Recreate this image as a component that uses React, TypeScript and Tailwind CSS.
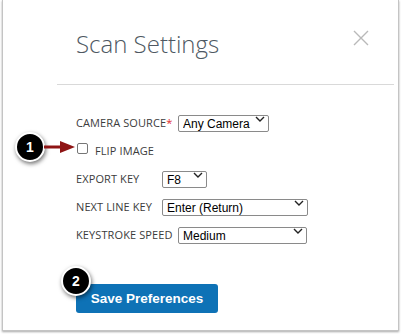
import React from "react";

const labelCls =
  "text-[11px] leading-[11px] mb-[-1px] uppercase text-[#3c3c3c] tracking-[0.1px]";

function FakeSelect({ value, width }: { value: string; width: string }) {
  return (
    <div className={`relative h-[17px] ${width}`}>
      <select
        defaultValue={value}
        className="appearance-none w-full h-full border border-[#8a8a8a] rounded-[2px] bg-white pl-[4px] pt-[1px] text-[12px] leading-[14px] text-black outline-none"
        style={{ fontFamily: '"Liberation Sans", Arial, sans-serif' }}
      >
        <option>{value}</option>
      </select>
      <svg
        className="absolute right-[4px] top-[6px] pointer-events-none"
        width="10"
        height="6"
        viewBox="0 0 10 6"
      >
        <path d="M1 1 L5 5 L9 1" fill="none" stroke="#222" strokeWidth="1.4" />
      </svg>
    </div>
  );
}

function Badge({ n, size }: { n: string; size: string }) {
  return (
    <div
      className={`${size} rounded-full bg-black border-2 border-white shadow-[1px_2px_4px_rgba(0,0,0,0.55)] flex items-center justify-center text-white font-bold text-[14px]`}
      style={{ fontFamily: '"Liberation Sans", Arial, sans-serif' }}
    >
      {n}
    </div>
  );
}

export default function App() {
  return (
    <div className="w-[401px] h-[334px] bg-white relative overflow-hidden">
      <div
        className="ml-[2px] w-[397px] h-[331px] border-x border-b border-[#c4c4c4] shadow-[0_1px_2px_rgba(0,0,0,0.35)] bg-white"
        style={{ fontFamily: '"Open Sans", sans-serif' }}
      >
        <div className="flex items-start justify-between pl-[73px] pr-[29px] pt-[28px]">
          <h1 className="text-[24px] leading-[32px] font-light text-[#4e5862]">
            Scan Settings
          </h1>
          <button className="mt-[2px]" aria-label="Close">
            <svg width="16" height="16" viewBox="0 0 16 16">
              <path d="M1 1 L15 15 M15 1 L1 15" stroke="#b9b9b9" strokeWidth="1.4" />
            </svg>
          </button>
        </div>
        <div className="mt-[24px] ml-[54px] mr-[4px] h-px bg-[#d9d9d9]" />

        <div className="pl-[73px] mt-[25px] flex flex-col gap-[11px]">
          <div className="flex items-end h-[17px]">
            <span className={`${labelCls} w-[102px]`}>
              Camera Source<span className="text-[#e02a2a]">*</span>
            </span>
            <FakeSelect value="Any Camera" width="w-[91px]" />
          </div>
          <div className="flex items-end h-[17px]">
            <input
              type="checkbox"
              className="appearance-none w-[11px] h-[11px] border border-[#767676] rounded-[2px] bg-white ml-[1px] mb-[1px]"
            />
            <span className={`${labelCls} ml-[7px]`}>Flip Image</span>
          </div>
          <div className="flex items-end h-[17px]">
            <span className={`${labelCls} w-[86px]`}>Export Key</span>
            <FakeSelect value="F8" width="w-[45px]" />
          </div>
          <div className="flex items-end h-[17px]">
            <span className={`${labelCls} w-[86px]`}>Next Line Key</span>
            <FakeSelect value="Enter (Return)" width="w-[146px]" />
          </div>
          <div className="flex items-end h-[17px]">
            <span className={`${labelCls} w-[102px]`}>Keystroke Speed</span>
            <FakeSelect value="Medium" width="w-[129px]" />
          </div>

          <button
            className="mt-[34px] w-[142px] h-[29px] rounded-[3px] bg-[#0e72b6] text-white font-bold text-[13.5px] pt-[1px]"
            style={{ fontFamily: '"Liberation Sans", Arial, sans-serif' }}
          >
            Save Preferences
          </button>
        </div>
      </div>

      {/* annotation 1 */}
      <div className="absolute left-[15px] top-[132px] flex items-center">
        <Badge n="1" size="w-[30px] h-[30px]" />
        <svg width="32" height="14" viewBox="0 0 32 14" className="-ml-[1px]">
          <path d="M0 7 H18" stroke="#8e1414" strokeWidth="3" />
          <path d="M16 1 L31 7 L16 13 Z" fill="#8e1414" />
        </svg>
      </div>

      {/* annotation 2 */}
      <div className="absolute left-[61px] top-[266px]">
        <Badge n="2" size="w-[30px] h-[30px]" />
      </div>
    </div>
  );
}
